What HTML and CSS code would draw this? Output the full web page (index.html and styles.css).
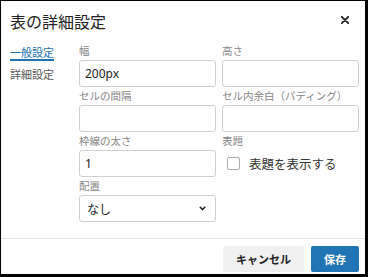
FILE: index.html
```html
<!DOCTYPE html>
<html lang="ja">
<head>
<meta charset="utf-8">
<title>表の詳細設定</title>
<link rel="stylesheet" href="styles.css">
</head>
<body>
<div class="dialog">
  <div class="header">
    <h1 class="title">表の詳細設定</h1>
    <button class="close" aria-label="閉じる">
      <svg width="8" height="8" viewBox="0 0 8 8"><path d="M0.8 0.8 L7.2 7.2 M7.2 0.8 L0.8 7.2" stroke="#1e1e1e" stroke-width="1.8" stroke-linecap="round" fill="none"/></svg>
    </button>
  </div>
  <div class="body">
    <nav class="nav">
      <div class="nav-item active">一般設定</div>
      <div class="nav-item">詳細設定</div>
    </nav>
    <div class="form">
      <div class="field">
        <div class="label">幅</div>
        <div class="input">200px</div>
      </div>
      <div class="field">
        <div class="label">高さ</div>
        <div class="input"></div>
      </div>
      <div class="field">
        <div class="label">セルの間隔</div>
        <div class="input"></div>
      </div>
      <div class="field">
        <div class="label">セル内余白（パディング）</div>
        <div class="input"></div>
      </div>
      <div class="field">
        <div class="label">枠線の太さ</div>
        <div class="input">1</div>
      </div>
      <div class="field">
        <div class="label">表題</div>
        <div class="check-row">
          <span class="checkbox"></span>
          <span class="check-text">表題を表示する</span>
        </div>
      </div>
      <div class="field">
        <div class="label">配置</div>
        <div class="input select">
          <span class="jp">なし</span>
          <svg width="7" height="5" viewBox="0 0 7 5"><path d="M0.8 0.8 L3.5 3.6 L6.2 0.8" stroke="#222" stroke-width="1.5" fill="none"/></svg>
        </div>
      </div>
    </div>
  </div>
  <div class="footer">
    <button class="btn btn-secondary">キャンセル</button>
    <button class="btn btn-primary">保存</button>
  </div>
</div>
</body>
</html>
```
FILE: styles.css
```css
html, body {
  margin: 0;
  padding: 0;
  background: #000;
}

body {
  width: 368px;
  height: 277px;
  overflow: hidden;
  font-family: "Noto Sans", "Noto Sans CJK JP", sans-serif;
  color: #222;
}

.dialog {
  margin: 1px 0 0 1px;
  width: 364px;
  height: 273px;
  background: #fff;
  display: flex;
  flex-direction: column;
  overflow: hidden;
}

.header {
  height: 38px;
  flex: none;
  display: flex;
  align-items: center;
  justify-content: space-between;
  padding: 0 16px 0 9px;
}

.title {
  margin: 0;
  font-family: "Noto Sans CJK JP", sans-serif;
  font-size: 16px;
  font-weight: 400;
  line-height: 20px;
  color: #222;
  padding-top: 1px;
}

.close {
  border: 0;
  background: none;
  padding: 0;
  width: 8px;
  height: 8px;
  display: flex;
}

.body {
  flex: 1;
  display: flex;
  padding: 0 6px 0 9px;
}

.nav {
  width: 69px;
  flex: none;
  padding-top: 7px;
  font-family: "Noto Sans CJK JP", sans-serif;
  font-size: 11px;
}

.nav-item {
  width: fit-content;
  line-height: 13px;
  color: #5a5a5a;
  border-bottom: 2px solid transparent;
  margin-bottom: 7px;
}

.nav-item.active {
  color: #2271b1;
  border-bottom-color: #2271b1;
}

.form {
  flex: 1;
  display: grid;
  grid-template-columns: 137px 137px;
  column-gap: 6px;
  align-content: start;
  padding-top: 3px;
}

.label {
  font-family: "Noto Sans CJK JP", sans-serif;
  font-size: 10.5px;
  line-height: 18px;
  height: 18px;
  color: #858585;
  white-space: nowrap;
}

.input {
  box-sizing: border-box;
  height: 27px;
  border: 1px solid #cfcfcf;
  border-radius: 3px;
  padding: 0 5px;
  font-size: 12px;
  line-height: 25px;
  color: #222;
}

.jp {
  font-family: "Noto Sans CJK JP", sans-serif;
  padding-left: 2px;
}

.select {
  display: flex;
  align-items: center;
  justify-content: space-between;
  padding-right: 9px;
}

.check-row {
  height: 27px;
  display: flex;
  align-items: center;
  padding-left: 5px;
}

.checkbox {
  box-sizing: border-box;
  width: 13px;
  height: 13px;
  border: 1px solid #aaa;
  border-radius: 2px;
  margin-right: 9px;
}

.check-text {
  font-family: "Noto Sans CJK JP", sans-serif;
  font-size: 12.5px;
  color: #333;
}

.footer {
  flex: none;
  height: 28px;
  border-top: 1px solid #e2e2e2;
  display: flex;
  justify-content: flex-end;
  align-items: flex-start;
  gap: 7px;
  padding: 7px 6px 0 0;
}

.btn {
  height: 26px;
  border: 0;
  border-radius: 2px;
  padding: 0 13px;
  font-family: "Noto Sans CJK JP", sans-serif;
  font-size: 11px;
  font-weight: 700;
}

.btn-secondary {
  background: #f0f0f0;
  color: #222;
}

.btn-primary {
  background: #2174b4;
  color: #fff;
}
```
